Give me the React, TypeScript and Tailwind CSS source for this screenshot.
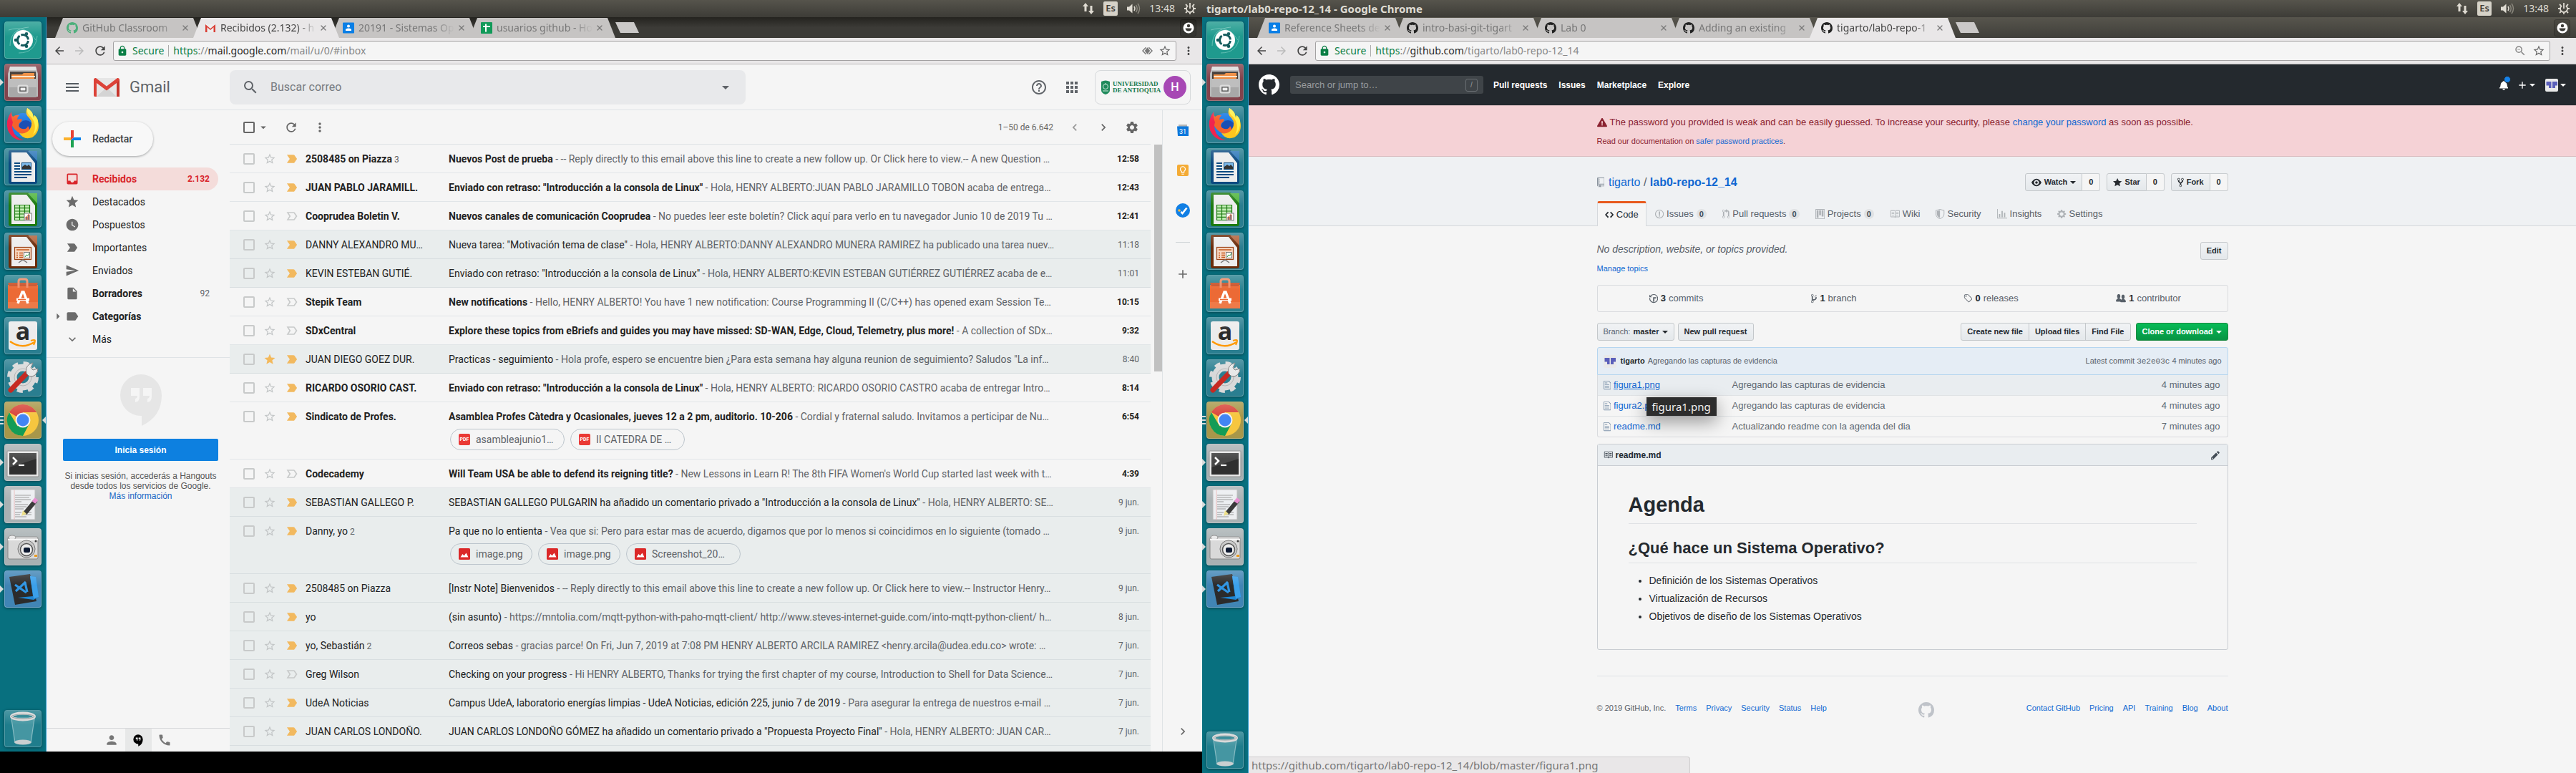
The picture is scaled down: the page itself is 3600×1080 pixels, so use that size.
import React from "react";
import {
  MdAdd,
  MdApps,
  MdArrowBack,
  MdArrowDropDown,
  MdArrowForward,
  MdArrowRight,
  MdCall,
  MdChevronLeft,
  MdChevronRight,
  MdExpandMore,
  MdHelpOutline,
  MdInbox,
  MdInsertDriveFile,
  MdLabel,
  MdLabelImportant,
  MdLabelImportantOutline,
  MdLock,
  MdMenu,
  MdMoreVert,
  MdPerson,
  MdRefresh,
  MdSearch,
  MdSend,
  MdSettings,
  MdStar,
  MdStarBorder,
  MdWatchLater,
  MdZoomOut,
  MdOutlineLightbulb,
} from "react-icons/md";
import { LuX } from "react-icons/lu";

/* ---------- Octicons ---------- */

const OCTICONS = {
  repo: [12, "M4 9H3V8h1v1zm0-3H3v1h1V6zm0-2H3v1h1V4zm0-2H3v1h1V2zm8-1v12c0 .55-.45 1-1 1H6v2l-1.5-1.5L3 16v-2H1c-.55 0-1-.45-1-1V1c0-.55.45-1 1-1h10c.55 0 1 .45 1 1zm-1 10H1v2h2v-1h3v1h5v-2zm0-10H2v9h9V1z"],
  code: [14, "M9.5 3L8 4.5 11.5 8 8 11.5 9.5 13 14 8 9.5 3zm-5 0L0 8l4.5 5L6 11.5 2.5 8 6 4.5 4.5 3z"],
  issue: [14, "M7 2.3c3.14 0 5.7 2.56 5.7 5.7s-2.56 5.7-5.7 5.7A5.71 5.71 0 0 1 1.3 8c0-3.14 2.56-5.7 5.7-5.7zM7 1C3.14 1 0 4.14 0 8s3.14 7 7 7 7-3.14 7-7-3.14-7-7-7zm1 3H6v5h2V4zm0 6H6v2h2v-2z"],
  pull: [12, "M11 11.28V5c-.03-.78-.34-1.47-.94-2.06C9.46 2.35 8.78 2.03 8 2H7V0L4 3l3 3V4h1c.27.02.48.11.69.31.21.2.3.42.31.69v6.28A1.993 1.993 0 0 0 10 15a1.993 1.993 0 0 0 1-3.72zm-1 2.92c-.66 0-1.2-.55-1.2-1.2 0-.65.55-1.2 1.2-1.2.65 0 1.2.55 1.2 1.2 0 .65-.55 1.2-1.2 1.2zM4 3c0-1.11-.89-2-2-2a1.993 1.993 0 0 0-1 3.72v6.56A1.993 1.993 0 0 0 2 15a1.993 1.993 0 0 0 1-3.72V4.72c.59-.34 1-.98 1-1.72zm-.8 10c0 .66-.55 1.2-1.2 1.2-.65 0-1.2-.55-1.2-1.2 0-.65.55-1.2 1.2-1.2.65 0 1.2.55 1.2 1.2zM2 4.2C1.34 4.2.8 3.65.8 3c0-.65.55-1.2 1.2-1.2.65 0 1.2.55 1.2 1.2 0 .65-.55 1.2-1.2 1.2z"],
  project: [15, "M10 12h3V2h-3v10zm-4-2h3V2H6v8zm-4 4h3V2H2v12zm-1 1h13V1H1v14zM14 0H1a1 1 0 0 0-1 1v14a1 1 0 0 0 1 1h13a1 1 0 0 0 1-1V1a1 1 0 0 0-1-1z"],
  book: [16, "M3 5h4v1H3V5zm0 3h4V7H3v1zm0 2h4V9H3v1zm11-5h-4v1h4V5zm0 2h-4v1h4V7zm0 2h-4v1h4V9zm2-6v9c0 .55-.45 1-1 1H9.5l-1 1-1-1H2c-.55 0-1-.45-1-1V3c0-.55.45-1 1-1h5.5l1 1 1-1H15c.55 0 1 .45 1 1zm-8 .5L7.5 3H2v9h6V3.5zm7-.5H9.5l-.5.5V12h6V3z"],
  shield: [14, "M0 2l7-2 7 2v6.02C14 12.69 8.69 16 7 16c-1.69 0-7-3.31-7-7.98V2zm1 .75L7 1l6 1.75v5.268C13 12.104 8.449 15 7 15c-1.449 0-6-2.896-6-6.982V2.75zm1 .75L7 2v12c-1.207 0-5-2.482-5-5.985V3.5z"],
  graph: [16, "M16 14v1H0V0h1v14h15zM5 13H3V8h2v5zm4 0H7V3h2v10zm4 0h-2V6h2v7z"],
  gear: [14, "M14 8.77v-1.6l-1.94-.64-.45-1.09.88-1.84-1.13-1.13-1.81.91-1.09-.45-.69-1.92h-1.6l-.63 1.94-1.11.45-1.84-.88-1.13 1.13.91 1.81-.45 1.09L0 7.23v1.59l1.94.64.45 1.09-.88 1.84 1.13 1.13 1.81-.91 1.09.45.69 1.92h1.59l.63-1.94 1.11-.45 1.84.88 1.13-1.13-.92-1.81.47-1.09L14 8.75v.02zM7 11c-1.66 0-3-1.34-3-3s1.34-3 3-3 3 1.34 3 3-1.34 3-3 3z"],
  history: [14, "M8 13H6V6h5v2H8v5zM7 1C4.81 1 2.87 2.02 1.59 3.59L0 2v4h4L2.5 4.5C3.55 3.17 5.17 2.3 7 2.3c3.14 0 5.7 2.56 5.7 5.7s-2.56 5.7-5.7 5.7A5.71 5.71 0 0 1 1.3 8c0-.34.03-.67.09-1H.08C.03 7.33 0 7.66 0 8c0 3.86 3.14 7 7 7s7-3.14 7-7-3.14-7-7-7z"],
  branch: [10, "M10 5c0-1.11-.89-2-2-2a1.993 1.993 0 0 0-1 3.72v.3c-.02.52-.23.98-.63 1.38-.4.4-.86.61-1.38.63-.83.02-1.48.16-2 .45V4.72a1.993 1.993 0 0 0-1-3.72C.88 1 0 1.89 0 3a2 2 0 0 0 1 1.72v6.56c-.59.35-1 .99-1 1.72 0 1.11.89 2 2 2 1.11 0 2-.89 2-2 0-.53-.2-1-.53-1.36.09-.06.48-.41.59-.47.25-.11.56-.17.94-.17 1.05-.05 1.95-.45 2.75-1.25S8.95 7.77 9 6.73h-.02C9.59 6.37 10 5.73 10 5zM2 1.8c.66 0 1.2.55 1.2 1.2 0 .65-.55 1.2-1.2 1.2C1.35 4.2.8 3.65.8 3c0-.65.55-1.2 1.2-1.2zm0 12.41c-.66 0-1.2-.55-1.2-1.2 0-.65.55-1.2 1.2-1.2.65 0 1.2.55 1.2 1.2 0 .65-.55 1.2-1.2 1.2zm6-8c-.66 0-1.2-.55-1.2-1.2 0-.65.55-1.2 1.2-1.2.65 0 1.2.55 1.2 1.2 0 .65-.55 1.2-1.2 1.2z"],
  tag: [14, "M7.73 1.73C7.26 1.26 6.62 1 5.96 1H3.5C2.13 1 1 2.13 1 3.5v2.47c0 .66.27 1.3.73 1.77l6.06 6.06c.39.39 1.02.39 1.41 0l4.59-4.59a.996.996 0 0 0 0-1.41L7.73 1.73zM2.38 7.09c-.31-.3-.47-.7-.47-1.13V3.5c0-.88.72-1.59 1.59-1.59h2.47c.42 0 .83.16 1.13.47l6.14 6.13-4.73 4.73-6.13-6.15zM3.01 3h2v2H3V3h.01z"],
  people: [16, "M16 12.999c0 .439-.45 1-1 1H7.995c-.539 0-.994-.447-.995-.999H1c-.54 0-1-.561-1-1 0-2.634 3-4 3-4s.229-.409 0-1c-.841-.621-1.058-.59-1-3 .058-2.419 1.367-3 2.5-3s2.442.58 2.5 3c.058 2.41-.159 2.379-1 3-.229.59 0 1 0 1s1.549.711 2.42 2.088A6.8 6.8 0 0 1 10 8.999s.229-.409 0-1c-.841-.62-1.058-.59-1-3 .058-2.419 1.367-3 2.5-3s2.437.581 2.495 3c.059 2.41-.158 2.38-1 3-.229.59 0 1 0 1s3.005 1.366 3.005 4z"],
  eye: [16, "M8.06 2C3 2 0 8 0 8s3 6 8.06 6C13 14 16 8 16 8s-3-6-7.94-6zM8 12c-2.2 0-4-1.78-4-4 0-2.2 1.8-4 4-4 2.22 0 4 1.8 4 4 0 2.22-1.78 4-4 4zm2-4c0 1.11-.89 2-2 2-1.11 0-2-.89-2-2 0-1.11.89-2 2-2 1.11 0 2 .89 2 2z"],
  star: [14, "M14 6l-4.9-.64L7 1 4.9 5.36 0 6l3.6 3.26L2.67 14 7 11.67 11.33 14l-.93-4.74L14 6z"],
  fork: [10, "M8 1a1.993 1.993 0 0 0-1 3.72V6L5 8 3 6V4.72A1.993 1.993 0 0 0 2 1a1.993 1.993 0 0 0-1 3.72V6.5l3 3v1.78A1.993 1.993 0 0 0 5 15a1.993 1.993 0 0 0 1-3.72V9.5l3-3V4.72A1.993 1.993 0 0 0 8 1zM2 4.2C1.34 4.2.8 3.65.8 3c0-.65.55-1.2 1.2-1.2.65 0 1.2.55 1.2 1.2 0 .65-.55 1.2-1.2 1.2zm3 10c-.66 0-1.2-.55-1.2-1.2 0-.65.55-1.2 1.2-1.2.65 0 1.2.55 1.2 1.2 0 .65-.55 1.2-1.2 1.2zm3-10c-.66 0-1.2-.55-1.2-1.2 0-.65.55-1.2 1.2-1.2.65 0 1.2.55 1.2 1.2 0 .65-.55 1.2-1.2 1.2z"],
  file: [12, "M6 5H2V4h4v1zM2 8h7V7H2v1zm0 2h7V9H2v1zm0 2h7v-1H2v1zm10-7.5V14c0 .55-.45 1-1 1H1c-.55 0-1-.45-1-1V2c0-.55.45-1 1-1h7.5L12 4.5zM11 5L8 2H1v12h10V5z"],
  pencil: [14, "M0 12v3h3l8-8-3-3-8 8zm3 2H1v-2h1v1h1v1zm10.3-9.3L12 6 9 3l1.3-1.3a.996.996 0 0 1 1.41 0l1.59 1.59c.39.39.39 1.02 0 1.41z"],
  alert: [16, "M8.893 1.5c-.183-.31-.52-.5-.887-.5s-.703.19-.886.5L.138 13.499a.98.98 0 0 0 0 1.001c.193.31.53.501.886.501h13.964c.367 0 .704-.19.877-.5a1.03 1.03 0 0 0 .01-1.002L8.893 1.5zm.133 11.497H6.987v-2.003h2.039v2.003zm0-3.004H6.987V5.987h2.039v4.006z"],
  bell: [14, "M14 12v1H0v-1l.73-.58c.77-.77.81-2.55 1.19-4.42C2.69 3.23 6 2 6 2c0-.55.45-1 1-1s1 .45 1 1c0 0 3.39 1.23 4.16 5 .38 1.88.42 3.66 1.19 4.42l.66.58H14zm-7 4c1.11 0 2-.89 2-2H5c0 1.11.89 2 2 2z"],
  mark: [16, "M8 0C3.58 0 0 3.58 0 8c0 3.54 2.29 6.53 5.47 7.59.4.07.55-.17.55-.38 0-.19-.01-.82-.01-1.49-2.01.37-2.53-.49-2.69-.94-.09-.23-.48-.94-.82-1.13-.28-.15-.68-.52-.01-.53.63-.01 1.08.58 1.23.82.72 1.21 1.87.87 2.33.66.07-.52.28-.87.51-1.07-1.78-.2-3.64-.89-3.64-3.95 0-.87.31-1.59.82-2.15-.08-.2-.36-1.02.08-2.12 0 0 .67-.21 2.2.82.64-.18 1.32-.27 2-.27.68 0 1.36.09 2 .27 1.53-1.04 2.2-.82 2.2-.82.44 1.1.16 1.92.08 2.12.51.56.82 1.27.82 2.15 0 3.07-1.87 3.75-3.65 3.95.29.25.54.73.54 1.48 0 1.07-.01 1.93-.01 2.2 0 .21.15.46.55.38A8.013 8.013 0 0 0 16 8c0-4.42-3.58-8-8-8z"],
} as const;

type OctName = keyof typeof OCTICONS;

function Oct({ name, className = "h-[14px]" }: { name: OctName; className?: string }) {
  const [w, d] = OCTICONS[name];
  return (
    <svg viewBox={`0 0 ${w} 16`} className={`w-auto shrink-0 fill-current ${className}`} aria-hidden="true">
      <path fillRule="evenodd" d={d} />
    </svg>
  );
}

function Caret() {
  return <span className="inline-block border-x-4 border-t-4 border-x-transparent border-t-current" aria-hidden="true" />;
}

/* ---------- Ubuntu top bar ---------- */

function TopBar({ title }: { title?: string }) {
  return (
    <div className="flex h-6 items-center bg-linear-to-b from-[#56544c] to-[#3d3c37] pl-1.5 pr-2 font-['Noto_Sans',sans-serif] text-[#dfdbd2]">
      <span className="flex-1 truncate text-[15px] font-bold leading-6">{title}</span>
      <div className="flex items-center gap-3">
        <svg viewBox="0 0 18 18" className="h-[18px] w-[18px] fill-current" aria-label="Red">
          <path d="M5 1l4 5H6.500v7h-3V6H1z M13 17l-4-5h2.500V5h3v7H17z" />
        </svg>
        <span className="flex h-5 w-5 items-center justify-center rounded-[2px] bg-[#d6d2c8] text-[13px] font-semibold text-[#3d3c37]">Es</span>
        <svg viewBox="0 0 20 18" className="h-[18px] w-5" aria-label="Volumen">
          <path d="M1 6.500h3l4.500-4v13l-4.500-4H1z" fill="currentColor" />
          <path d="M11 6q2 3 0 6" fill="none" stroke="currentColor" strokeWidth="1.500" />
          <path d="M13.500 4q3.500 5 0 10M16 2q5 7 0 14" fill="none" stroke="#8a877d" strokeWidth="1.500" />
        </svg>
        <time className="text-sm">13:48</time>
        <svg viewBox="0 0 18 18" className="h-[18px] w-[18px]" fill="none" stroke="currentColor" aria-label="Sistema">
          <path d="M6.200 4.900a5 5 0 1 0 5.600 0" strokeWidth="1.800" />
          <path d="M9 1v8M9 14v3M1 9h3M14 9h3M3 3l2 2M13 13l2 2M3 15l2-2M13 5l2-2" strokeWidth="1.800" />
        </svg>
      </div>
    </div>
  );
}

/* ---------- Launcher ---------- */

const ICONS: Record<string, React.ReactNode> = {
  dash: (
    <>
      <path d="M6 12Q30 4 44 26M8 34Q8 10 34 8M46 20Q44 44 20 44" fill="none" stroke="#8fd6cc" strokeWidth="1" opacity=".6" />
      <circle cx="26" cy="26" r="14" fill="#fff" />
      <circle cx="26" cy="26" r="7.500" fill="none" stroke="#125a5c" strokeWidth="3" strokeDasharray="13.700 2" strokeDashoffset="-1" />
      <circle cx="16" cy="26" r="2.300" fill="#125a5c" />
      <circle cx="31" cy="17.300" r="2.300" fill="#125a5c" />
      <circle cx="31" cy="34.700" r="2.300" fill="#125a5c" />
    </>
  ),
  files: (
    <>
      <path d="M8 4h36l3 10v32H5V14z" fill="#b9b9b9" />
      <path d="M8 4h36l1 5H7z" fill="#dcdcdc" />
      <rect x="8" y="11" width="36" height="12" fill="#3c3530" />
      <path d="M10 15h15l2-2h15v10H10z" fill="#f08b3c" />
      <rect x="10" y="17" width="33" height="2" fill="#fbe3c8" />
      <rect x="7" y="21" width="38" height="26" fill="#a8a8a8" />
      <rect x="7" y="21" width="38" height="12" fill="#bebebe" />
      <rect x="19.500" y="30.500" width="13" height="10" rx="2" fill="none" stroke="#dedede" strokeWidth="2" />
      <rect x="22" y="33" width="8" height="5" fill="#eee" stroke="#444" strokeWidth="1" />
    </>
  ),
  firefox: (
    <>
      <circle cx="26" cy="27" r="17" fill="#1f7ee6" />
      <circle cx="30" cy="30" r="10" fill="#1a4fb5" />
      <path d="M10 8q0 5 2 7q4-3 9-2q-3 3-3 6l6-1q2 3-3 6q-3 6 4 8q7 1 8-4q5 6-2 10q-8 3-15-4Q6 26 10 8z" fill="#f6622c" />
      <path d="M10 8q-9 12-5 26q7 15 22 14q-12-3-15-14q-2-6 0-11Q9 16 10 8z" fill="#f0234f" />
      <path d="M32 3q-4 8 3 14q6 7 1 15q-5 8-15 6q6 10 18 6q12-8 8-23q-1-5-5-8q-1 3-1 4Q40 7 32 3z" fill="#ffc61e" />
      <path d="M32 3q-1 8 5 12q10 12 3 25q8-6 7-19q-1-5-5-8l-1 4Q40 7 32 3z" fill="#fff04a" />
    </>
  ),
  writer: (
    <>
      <path d="M8 3h26l12 15v29q0 3-3 3H9q-3 0-3-3V6q0-3 2-3z" fill="#0b4a80" />
      <path d="M10 6h21l12 15v26H10z" fill="#ededed" />
      <path d="M33 4h13v14z" fill="#2f79ba" />
      <path d="M14 21h8M14 25h8M14 29h8M14 33h24M14 37h24M14 41h18" stroke="#0b4a80" strokeWidth="2" />
      <rect x="24.500" y="20.500" width="13" height="9" fill="#7db9ea" stroke="#0b4a80" />
      <path d="M25 29v-3l4-3 3 2 2-2 3 3v3z" fill="#333" />
    </>
  ),
  calc: (
    <>
      <path d="M8 3h26l12 15v29q0 3-3 3H9q-3 0-3-3V6q0-3 2-3z" fill="#1c7a10" />
      <path d="M10 6h21l12 15v26H10z" fill="#ededed" />
      <path d="M33 4h13v14z" fill="#4fb53c" />
      <path d="M14.500 20.500h21v21h-21z M14.500 24.700h21M14.500 29h21M14.500 33h21M14.500 37.300h21M21.500 20.500v21M28.500 20.500v21" fill="#c6efb8" stroke="#1c7a10" strokeWidth="1.200" />
      <rect x="28" y="32" width="10" height="10" fill="#fff" stroke="#777" />
      <path d="M30 41v-4h2v4M33 41v-7h2v7" stroke="#d9541e" fill="#3f8fd6" />
    </>
  ),
  impress: (
    <>
      <path d="M8 3h26l12 15v29q0 3-3 3H9q-3 0-3-3V6q0-3 2-3z" fill="#6b2c0a" />
      <path d="M10 6h21l12 15v26H10z" fill="#ededed" />
      <path d="M33 4h13v14z" fill="#b2623a" />
      <rect x="14.500" y="20.500" width="23" height="17" fill="#f7d9c3" stroke="#9c4214" strokeWidth="1.200" />
      <path d="M17 24h18M17 28.500h2M17 31.500h2M17 34.500h2M21 28.500h5M21 31.500h5M21 34.500h5" stroke="#c5551a" strokeWidth="1.600" />
      <rect x="27.500" y="27.500" width="8" height="8" fill="#fff" stroke="#777" />
      <path d="M29 34l2-3 2 1 2-3" fill="none" stroke="#2a9a3a" />
      <path d="M20 42l6-4 6 4" fill="none" stroke="#777" strokeWidth="1.500" />
    </>
  ),
  software: (
    <>
      <path d="M5 14h42v33H5z" fill="#ec6a35" />
      <path d="M5 11h42l-2 5H7z" fill="#c9522a" />
      <path d="M20 18V9q0-3 3-3h6q3 0 3 3v9" fill="none" stroke="#f08c66" strokeWidth="3" />
      <path d="M5 38h42v9H5z" fill="#f2895c" opacity=".5" />
      <path d="M19 40l6-16h2l6 16" fill="none" stroke="#fff" strokeWidth="3.500" />
      <path d="M17 34.500h18" stroke="#fff" strokeWidth="4" />
      <path d="M19 34.500h11" stroke="#ec6a35" strokeWidth="1.500" />
    </>
  ),
  amazon: (
    <>
      <rect x="6" y="6" width="40" height="40" rx="3" fill="#ececec" />
      <text x="26" y="32" textAnchor="middle" className="font-['Open_Sans',sans-serif] text-[34px] font-bold" fill="#2b2b2b">a</text>
      <path d="M8 34q17 12 34 1" fill="none" stroke="#f90" strokeWidth="2.500" />
      <path d="M37 33q6-2 6 0t-2 6" fill="none" stroke="#f90" strokeWidth="2" />
    </>
  ),
  settings: (
    <>
      <circle cx="26" cy="25" r="13.500" fill="none" stroke="#d9d9d9" strokeWidth="10" />
      <circle cx="26" cy="25" r="19.500" fill="none" stroke="#d9d9d9" strokeWidth="5" strokeDasharray="8 7.315" />
      <circle cx="26" cy="25" r="12" fill="none" stroke="#b5b5b5" strokeWidth="1" />
      <path d="M9 43L34 17" stroke="#c62a22" strokeWidth="7" strokeLinecap="round" />
      <path d="M31 20q-2-9 4-13l5-2-3 7 3 3 7-2q-1 9-8 11-4 0-5-1z" fill="#e8e8e8" stroke="#777" strokeWidth="1" />
    </>
  ),
  chrome: (
    <>
      <circle cx="26" cy="26" r="22" fill="#f6c63f" />
      <path d="M26 26L6.900 15A22 22 0 0 1 45 15H26z" fill="#d8453a" />
      <path d="M26 26l-7.500 8.500L6.900 15A22 22 0 0 0 26 48l9-17z" fill="#139c56" />
      <circle cx="26" cy="26" r="10.500" fill="#f1f1f1" />
      <circle cx="26" cy="26" r="8.500" fill="#4285f4" />
    </>
  ),
  terminal: (
    <>
      <rect x="4" y="10" width="44" height="36" rx="1" fill="#e6e6e6" stroke="#8b8b8b" strokeWidth="1" />
      <rect x="7" y="13" width="38" height="30" fill="#2f2f2f" />
      <path d="M7 13h38v8L7 33z" fill="#fff" opacity=".12" />
      <path d="M12 19l5 5-5 5" fill="none" stroke="#fff" strokeWidth="2.500" />
      <path d="M20 30h8" stroke="#fff" strokeWidth="2.200" />
    </>
  ),
  gedit: (
    <>
      <rect x="9" y="5" width="34" height="42" fill="#eceef1" stroke="#b5b5b5" />
      <path d="M14 5v42" stroke="#e8b8b8" />
      <path d="M15 13h22M15 16h20M15 19h22M15 22h9M15 26h18M15 29h16M15 32h12M15 37h9M30 37h8M15 40h7M26 40h12M15 43h16" stroke="#999" strokeWidth="1" />
      <path d="M29 38L44 20" stroke="#3a3a3a" strokeWidth="6" />
      <path d="M41 23l4-5" stroke="#e88fd2" strokeWidth="6" />
      <path d="M24 42l2-8 5 5z" fill="#eee08a" />
    </>
  ),
  camera: (
    <>
      <rect x="5" y="12" width="42" height="31" rx="2" fill="#d9d9d9" stroke="#888" strokeWidth="1" />
      <ellipse cx="11" cy="13" rx="5" ry="3" fill="#e8e8e8" stroke="#888" />
      <path d="M5 16h42" stroke="#f6f6f6" strokeWidth="2" />
      <circle cx="31" cy="29" r="12" fill="#c9c9c9" stroke="#777" strokeWidth="1" />
      <circle cx="31" cy="30" r="8.500" fill="#eee" stroke="#555" strokeWidth="1.500" />
      <rect x="27" y="27" width="9" height="7" rx="2" fill="#0c1830" />
      <rect x="42" y="37" width="4" height="3" fill="#e89a20" />
      <circle cx="44" cy="18" r="1.500" fill="#333" />
    </>
  ),
  code: (
    <>
      <path d="M7 9l29-4 9 38-30 5z" fill="#2b2b2b" />
      <path d="M36 8l8 1 4 28-7 4-22-3 21-2z" fill="#1f86d3" />
      <path d="M36 8l8 1 4 28-7 2z" fill="#3ba0ea" />
      <path d="M30 16L16 29M15 20l16 11" stroke="#2f95e3" strokeWidth="3.200" />
      <path d="M29 17l3 13" stroke="#2f95e3" strokeWidth="3.200" />
    </>
  ),
  trash: (
    <>
      <path d="M9 10h34l-5 36q-12 4-24 0z" fill="#9fd0d6" opacity=".3" />
      <path d="M10 12l5 33M42 12l-5 33" stroke="#cfe4e6" opacity=".5" />
      <ellipse cx="26" cy="45" rx="12" ry="3.500" fill="#c9cfd0" />
      <ellipse cx="26" cy="9" rx="16" ry="4.500" fill="none" stroke="#d6d6d6" strokeWidth="4" />
      <ellipse cx="26" cy="9" rx="16" ry="3" fill="none" stroke="#8c9a9c" strokeWidth="1" />
    </>
  ),
};

const LAUNCHER = [
  { id: "dash", label: "Buscar en el equipo", tint: "bg-[#1f9a8e]" },
  { id: "files", label: "Archivos", tint: "bg-[#83434c]", running: 1 },
  { id: "firefox", label: "Firefox", tint: "bg-[#2a7e90]" },
  { id: "writer", label: "LibreOffice Writer", tint: "bg-[#2a7e90]" },
  { id: "calc", label: "LibreOffice Calc", tint: "bg-[#2a7e90]" },
  { id: "impress", label: "LibreOffice Impress", tint: "bg-[#2a7e90]" },
  { id: "software", label: "Software de Ubuntu", tint: "bg-[#2a8290]" },
  { id: "amazon", label: "Amazon", tint: "bg-[#2a7e90]" },
  { id: "settings", label: "Configuración", tint: "bg-[#2a7e90]" },
  { id: "chrome", label: "Google Chrome", tint: "bg-[#a8974a]", running: 3 },
  { id: "terminal", label: "Terminal", tint: "bg-[#a9b1b3]", running: 1 },
  { id: "gedit", label: "Editor de textos", tint: "bg-[#a9b1b3]", running: 1 },
  { id: "camera", label: "Captura de pantalla", tint: "bg-[#a9b1b3]", running: 1 },
  { id: "code", label: "Visual Studio Code", tint: "bg-[#4185b5]", running: 1 },
];

function Tile({ id, label, tint, running = 0 }: { id: string; label: string; tint: string; running?: number }) {
  return (
    <button aria-label={label} className={`relative h-[52px] w-[52px] rounded-[4px] border border-white/25 shadow-[0_1px_4px_rgba(0,0,0,0.4)] ${tint}`}>
      <svg viewBox="0 0 52 52" className="-m-px h-[52px] w-[52px]" aria-hidden="true">{ICONS[id]}</svg>
      <span className="absolute inset-x-0 top-0 h-5 rounded-t-[3px] bg-linear-to-b from-white/20 to-transparent" />
      {running === 1 && <span className="absolute -left-[7px] top-5 border-y-[5px] border-l-[5px] border-y-transparent border-l-[#d8dcdc]" />}
      {running === 3 && (
        <>
          <span className="absolute -left-[7px] top-[19px] h-3 w-[5px] border-y-2 border-[#d8dcdc]" />
          <span className="absolute -left-[7px] top-6 h-0.5 w-[5px] bg-[#d8dcdc]" />
          <span className="absolute -right-[7px] top-5 border-y-[5px] border-r-[5px] border-y-transparent border-r-[#d8dcdc]" />
        </>
      )}
    </button>
  );
}

function Launcher() {
  return (
    <nav aria-label="Lanzador" className="flex w-[65px] shrink-0 flex-col gap-[7px] border-r border-[#2f9bd0] bg-[#08707f] px-1.5 pb-1.5 pt-1.5">
      {LAUNCHER.map((item) => (
        <Tile key={item.id} {...item} />
      ))}
      <div className="mt-auto h-[52px]">
        <Tile id="trash" label="Papelera" tint="bg-[#1f7d8c]" />
      </div>
    </nav>
  );
}

/* ---------- Chrome frame ---------- */

function Favicon({ kind }: { kind: string }) {
  if (kind === "github") return <Oct name="mark" className="h-4 text-[#222]" />;
  if (kind === "classroom-gh") return <Oct name="mark" className="h-4 text-[#4caf7a]" />;
  if (kind === "gmail")
    return (
      <svg viewBox="0 0 16 16" className="h-4 w-4 shrink-0" aria-hidden="true">
        <path d="M1 3h14v11H1z" fill="#eee" />
        <path d="M1 14V3l7 6 7-6v11h-2.500V7L8 11 3.500 7v7z" fill="#d93c33" />
      </svg>
    );
  if (kind === "classroom")
    return (
      <svg viewBox="0 0 16 16" className="h-4 w-4 shrink-0" aria-hidden="true">
        <rect width="16" height="15" y=".5" rx="1" fill="#0a7fe6" />
        <circle cx="8" cy="5.500" r="2" fill="#fff" />
        <path d="M4 12V9.800Q8 7 12 9.800V12z" fill="#fff" />
      </svg>
    );
  return (
    <svg viewBox="0 0 16 16" className="h-4 w-4 shrink-0" aria-hidden="true">
      <rect width="16" height="16" rx="1" fill="#119a59" />
      <path d="M7 2.500v11M3 6h10" stroke="#fff" strokeWidth="2" />
    </svg>
  );
}

interface TabInfo {
  title: string;
  icon: string;
  active?: boolean;
}

function TabStrip({ tabs, dark }: { tabs: TabInfo[]; dark?: boolean }) {
  return (
    <div className={`flex h-[29px] items-end pl-3 pr-2 ${dark ? "bg-linear-to-b from-[#24231f] via-[#3c3b37] to-[#3c3b37]" : "bg-linear-to-b from-[#57554d] to-[#403f3a]"}`}>
      {tabs.map((tab) => (
        <div
          key={tab.title}
          className={`-mr-[11px] flex h-7 w-[204px] items-center pb-px pl-4 pr-[15px] [clip-path:polygon(11px_0,193px_0,100%_100%,0_100%)] ${tab.active ? "z-10 bg-[#e9e7e8] text-[#444]" : "bg-[#c6c4c3] text-[#777]"}`}
        >
          <Favicon kind={tab.icon} />
          <button className="ml-1.5 w-[134px] overflow-hidden whitespace-nowrap text-left text-sm [mask-image:linear-gradient(to_right,black_80%,transparent)]">
            {tab.title}
          </button>
          <button aria-label="Cerrar pestaña" className="ml-1 text-[#777]">
            <LuX className="h-3 w-3" strokeWidth={2.5} />
          </button>
        </div>
      ))}
      <button aria-label="Nueva pestaña" className="mb-[7px] ml-[11px] h-[15px] w-[33px] bg-[#cbc9c8] [clip-path:polygon(0_0,26px_0,100%_100%,7px_100%)]" />
      <div className="ml-auto flex h-6 w-[23px] items-center justify-center self-center rounded border border-black/20 bg-black/10">
        <svg viewBox="0 0 16 16" className="h-4 w-4" aria-label="Perfil">
          <circle cx="8" cy="8" r="7.500" fill="#fff" />
          <circle cx="8" cy="5" r="2.200" fill="#3c3b37" />
          <path d="M3.500 8.500h9Q12 12.500 8 12.500T3.500 8.500z" fill="#3c3b37" />
        </svg>
      </div>
    </div>
  );
}

function AddressBar({ host, path, tool }: { host: string; path: string; tool: React.ReactNode }) {
  return (
    <div className="flex h-[37px] items-center border-b border-[#bcbabb] bg-[#e9e7e8] pl-[9px] pr-2.5 text-[#444]">
      <button aria-label="Atrás"><MdArrowBack className="h-[18px] w-[18px]" /></button>
      <button aria-label="Adelante" className="ml-2.5 text-[#bbb]"><MdArrowForward className="h-[18px] w-[18px]" /></button>
      <button aria-label="Recargar" className="ml-2.5"><MdRefresh className="h-5 w-5" /></button>
      <div className="ml-2 flex h-7 flex-1 items-center rounded-[3px] border border-[#a3a1a2] bg-[#f5f5f5] pl-1 pr-1.5">
        <MdLock className="h-4 w-4 text-[#0b7f46]" />
        <span className="ml-1.5 text-sm text-[#0b7f46]">Secure</span>
        <span className="mx-1.5 h-4 w-px bg-[#aaa]" />
        <div role="textbox" aria-label="Dirección" className="flex-1 truncate text-sm text-[#888]">
          <span className="text-[#0b7f46]">https</span>://<span className="text-[#2b2b2b]">{host}</span>{path}
        </div>
        {tool}
        <button aria-label="Añadir a marcadores" className="ml-2 text-[#666]"><MdStarBorder className="h-[18px] w-[18px]" /></button>
      </div>
      <button aria-label="Menú" className="ml-2"><MdMoreVert className="h-[18px] w-[18px]" /></button>
    </div>
  );
}

/* ---------- Gmail ---------- */

interface Chip {
  kind: "pdf" | "image";
  name: string;
  wide?: boolean;
}

interface Mail {
  from: string;
  count?: number;
  subject: string;
  snippet: string;
  time: string;
  unread?: boolean;
  important?: boolean;
  starred?: boolean;
  chips?: Chip[];
}

const MAILS: Mail[] = [
  { from: "2508485 on Piazza", count: 3, subject: "Nuevos Post de prueba", snippet: "-- Reply directly to this email above this line to create a new follow up. Or Click here to view.-- A new Question …", time: "12:58", unread: true, important: true },
  { from: "JUAN PABLO JARAMILL.", subject: 'Enviado con retraso: "Introducción a la consola de Linux"', snippet: "Hola, HENRY ALBERTO:JUAN PABLO JARAMILLO TOBON acaba de entrega…", time: "12:43", unread: true, important: true },
  { from: "Cooprudea Boletin V.", subject: "Nuevos canales de comunicación Cooprudea", snippet: "No puedes leer este boletín? Click aquí para verlo en tu navegador Junio 10 de 2019 Tu …", time: "12:41", unread: true },
  { from: "DANNY ALEXANDRO MU…", subject: 'Nueva tarea: "Motivación tema de clase"', snippet: "Hola, HENRY ALBERTO:DANNY ALEXANDRO MUNERA RAMIREZ ha publicado una tarea nuev…", time: "11:18", important: true },
  { from: "KEVIN ESTEBAN GUTIÉ.", subject: 'Enviado con retraso: "Introducción a la consola de Linux"', snippet: "Hola, HENRY ALBERTO:KEVIN ESTEBAN GUTIÉRREZ GUTIÉRREZ acaba de e…", time: "11:01", important: true },
  { from: "Stepik Team", subject: "New notifications", snippet: "Hello, HENRY ALBERTO! You have 1 new notification: Course Programming II (C/C++) has opened exam Session Te…", time: "10:15", unread: true },
  { from: "SDxCentral", subject: "Explore these topics from eBriefs and guides you may have missed: SD-WAN, Edge, Cloud, Telemetry, plus more!", snippet: "A collection of SDx…", time: "9:32", unread: true },
  { from: "JUAN DIEGO GOEZ DUR.", subject: "Practicas - seguimiento", snippet: 'Hola profe, espero se encuentre bien ¿Para esta semana hay alguna reunion de seguimiento? Saludos "La inf…', time: "8:40", important: true, starred: true },
  { from: "RICARDO OSORIO CAST.", subject: 'Enviado con retraso: "Introducción a la consola de Linux"', snippet: "Hola, HENRY ALBERTO: RICARDO OSORIO CASTRO acaba de entregar Intro…", time: "8:14", unread: true, important: true },
  {
    from: "Sindicato de Profes.", subject: "Asamblea Profes Càtedra y Ocasionales, jueves 12 a 2 pm, auditorio. 10-206", snippet: "Cordial y fraternal saludo. Invitamos a perticipar de Nu…", time: "6:54", unread: true, important: true,
    chips: [{ kind: "pdf", name: "asambleajunio1…", wide: true }, { kind: "pdf", name: "II CATEDRA DE …", wide: true }],
  },
  { from: "Codecademy", subject: "Will Team USA be able to defend its reigning title?", snippet: "New Lessons in Learn R! The 8th FIFA Women's World Cup started last week with t…", time: "4:39", unread: true },
  { from: "SEBASTIAN GALLEGO P.", subject: 'SEBASTIAN GALLEGO PULGARIN ha añadido un comentario privado a "Introducción a la consola de Linux"', snippet: "Hola, HENRY ALBERTO: SE…", time: "9 jun.", important: true },
  {
    from: "Danny, yo", count: 2, subject: "Pa que no lo entienta", snippet: "Vea que si: Pero para estar mas de acuerdo, digamos que por lo menos si coincidimos en lo siguiente (tomado …", time: "9 jun.", important: true,
    chips: [{ kind: "image", name: "image.png" }, { kind: "image", name: "image.png" }, { kind: "image", name: "Screenshot_20…", wide: true }],
  },
  { from: "2508485 on Piazza", subject: "[Instr Note] Bienvenidos", snippet: "-- Reply directly to this email above this line to create a new follow up. Or Click here to view.-- Instructor Henry…", time: "9 jun.", important: true },
  { from: "yo", subject: "(sin asunto)", snippet: "https://mntolia.com/mqtt-python-with-paho-mqtt-client/ http://www.steves-internet-guide.com/into-mqtt-python-client/ h…", time: "8 jun.", important: true },
  { from: "yo, Sebastián", count: 2, subject: "Correos sebas", snippet: "gracias parce! On Fri, Jun 7, 2019 at 7:08 PM HENRY ALBERTO ARCILA RAMIREZ <henry.arcila@udea.edu.co> wrote: …", time: "7 jun.", important: true },
  { from: "Greg Wilson", subject: "Checking on your progress", snippet: "Hi HENRY ALBERTO, Thanks for trying the first chapter of my course, Introduction to Shell for Data Science…", time: "7 jun." },
  { from: "UdeA Noticias", subject: "Campus UdeA, laboratorio energías limpias - UdeA Noticias, edición 225, junio 7 de 2019", snippet: "Para asegurar la entrega de nuestros e-mail …", time: "7 jun.", important: true },
  { from: "JUAN CARLOS LONDOÑO.", subject: 'JUAN CARLOS LONDOÑO GÓMEZ ha añadido un comentario privado a "Propuesta Proyecto Final"', snippet: "Hola, HENRY ALBERTO: JUAN CAR…", time: "7 jun.", important: true },
];

function ChipView({ chip }: { chip: Chip }) {
  return (
    <button className={`flex h-[30px] items-center gap-2 rounded-full border border-[#bcc5cc] pl-[11px] text-sm text-[#5f6368] ${chip.wide ? "w-[160px]" : "w-[115px]"}`}>
      {chip.kind === "pdf" ? (
        <span className="flex h-4 w-4 items-center justify-center rounded-[2px] bg-[#ea3a35] text-[7px] font-bold text-white">PDF</span>
      ) : (
        <svg viewBox="0 0 16 16" className="h-4 w-4" aria-hidden="true">
          <rect width="16" height="16" rx="1.500" fill="#db2828" />
          <path d="M2.500 12.500l3-4.500 2 2.500 3-4 3 6z" fill="#fff" />
        </svg>
      )}
      {chip.name}
    </button>
  );
}

function MailRow({ mail }: { mail: Mail }) {
  const weight = mail.unread ? "font-bold" : "font-normal";
  return (
    <li className={`border-b pl-[19px] pr-4 text-sm ${mail.unread ? "border-[#e1e5e8] bg-[#f5f5f5]" : "border-[#d8dee0] bg-[#e9eded]"}`}>
      <div className="flex h-[39px] items-center">
        <input type="checkbox" aria-label={`Seleccionar ${mail.from}`} className="h-4 w-4 shrink-0 appearance-none rounded-[2px] border-2 border-[#c8caca]" />
        <button aria-label="Destacar" className="ml-3 shrink-0">
          {mail.starred ? <MdStar className="h-[18px] w-[18px] text-[#f3b95c]" /> : <MdStarBorder className="h-[18px] w-[18px] text-[#c2c5c6]" />}
        </button>
        <button aria-label="Importante" className="ml-3 shrink-0">
          {mail.important ? <MdLabelImportant className="h-5 w-5 text-[#f2b95f]" /> : <MdLabelImportantOutline className="h-5 w-5 text-[#c8caca]" />}
        </button>
        <span className={`ml-[9px] w-[200px] shrink-0 truncate text-[#222] ${weight}`}>
          {mail.from}
          {mail.count && <span className="text-xs font-normal text-[#5f6368]"> {mail.count}</span>}
        </span>
        <a href="#mensaje" className="min-w-0 flex-1 truncate text-[#5f6368]">
          <span className={`text-[#222] ${weight}`}>{mail.subject}</span> - {mail.snippet}
        </a>
        <time className={`w-[92px] shrink-0 text-right text-xs ${mail.unread ? "font-bold text-[#222]" : "text-[#5f6368]"}`}>{mail.time}</time>
      </div>
      {mail.chips && (
        <div className="-mt-0.5 flex h-[42px] items-start gap-2 pl-[289px]">
          {mail.chips.map((chip, i) => (
            <ChipView key={i} chip={chip} />
          ))}
        </div>
      )}
    </li>
  );
}

const FOLDERS = [
  { label: "Recibidos", icon: MdInbox, count: "2.132", active: true },
  { label: "Destacados", icon: MdStar },
  { label: "Pospuestos", icon: MdWatchLater },
  { label: "Importantes", icon: MdLabelImportant },
  { label: "Enviados", icon: MdSend },
  { label: "Borradores", icon: MdInsertDriveFile, count: "92", bold: true },
  { label: "Categorías", icon: MdLabel, bold: true, nested: true },
  { label: "Más", icon: MdExpandMore },
];

function HangoutsMark({ className }: { className: string }) {
  return (
    <svg viewBox="0 0 60 74" className={className} aria-hidden="true">
      <path d="M30 1a29 29 0 0 0 0 58h1v14Q59 60 59 30A29 29 0 0 0 30 1z" fill="currentColor" />
      <path d="M16 20h12v12q0 7-6 8v-5q3-1 3-4h-9zM33 20h12v12q0 7-6 8v-5q3-1 3-4h-9z" className="fill-[#f5f5f5]" />
    </svg>
  );
}

function MailSidebar() {
  return (
    <aside className="flex w-64 shrink-0 flex-col text-sm text-[#222]">
      <button className="ml-2 mt-4 flex h-12 w-[141px] items-center gap-4 self-start rounded-full bg-[#f8f8f8] pl-4 font-medium text-[#3c4043] shadow-[0_1px_3px_rgba(60,64,67,0.45)]">
        <svg viewBox="0 0 24 24" className="h-6 w-6" aria-hidden="true">
          <path d="M10 0h4v10l-4 4z" fill="#ea4335" />
          <path d="M0 10h10v4H0z" fill="#fbb12d" />
          <path d="M10 14h4v10h-4z" fill="#1ea352" />
          <path d="M14 10h10v4H10z" fill="#0a80ec" />
        </svg>
        Redactar
      </button>
      <ul className="mt-4">
        {FOLDERS.map(({ label, icon: Icon, count, active, bold, nested }) => (
          <li key={label} className="relative">
            <a
              href={`#${label}`}
              className={`mr-4 flex h-8 items-center rounded-r-full pl-[26px] pr-3 ${active ? "bg-[#f4dcda] font-bold text-[#d9252a]" : ""} ${bold ? "font-bold" : ""}`}
            >
              <Icon className={`h-5 w-5 ${active ? "" : "text-[#6b6b6b]"}`} />
              <span className="ml-[18px] flex-1">{label}</span>
              {count && <span className={`text-xs ${active ? "" : "font-normal text-[#5f6368]"}`}>{count}</span>}
            </a>
            {nested && <MdArrowRight className="absolute left-1.5 top-1.5 h-5 w-5 text-[#6b6b6b]" />}
          </li>
        ))}
      </ul>
      <div className="mt-[9px] flex flex-col items-center border-t border-[#dfe3e6] pl-[23px] pr-4 pt-[22px] text-center text-xs text-[#555]">
        <HangoutsMark className="h-[74px] w-[60px] text-[#e6e6e6]" />
        <button className="mt-[17px] h-[31px] w-full rounded-[2px] bg-[#0d80e0] font-['Liberation_Sans',sans-serif] font-bold text-white">Inicia sesión</button>
        <p className="-mx-1 mt-3.5 whitespace-nowrap font-['Liberation_Sans',sans-serif] leading-[14px]">
          Si inicias sesión, accederás a Hangouts
          <br />
          desde todos los servicios de Google.
          <br />
          <a href="#info" className="text-[#1a67c4]">Más información</a>
        </p>
      </div>
      <div className="mt-auto flex h-[33px] justify-center border-t border-[#d6d8da] text-[#777]">
        <button aria-label="Contactos" className="flex w-[37px] items-center justify-center"><MdPerson className="h-5 w-5" /></button>
        <button aria-label="Hangouts" className="flex w-[37px] items-center justify-center bg-[#e7e8e8] text-black"><HangoutsMark className="h-[17px] w-[14px]" /></button>
        <button aria-label="Llamadas" className="flex w-[37px] items-center justify-center"><MdCall className="h-5 w-5" /></button>
      </div>
    </aside>
  );
}

function GmailHeader() {
  return (
    <header className="flex h-16 items-center border-b border-[#dfe3e6] pl-6 pr-4 text-[#5f6368]">
      <div className="flex w-[232px] items-center">
        <button aria-label="Menú principal"><MdMenu className="h-6 w-6 text-[#555b61]" /></button>
        <svg viewBox="0 0 36 26" className="ml-[18px] h-[26px] w-9" aria-hidden="true">
          <path d="M2 0h32v26H2z" fill="#e6e6e6" />
          <path d="M4 26l14-13 14 13z" fill="#d4d4d4" />
          <path d="M0 2.500Q0 0 2.500 0H3l15 11.500L33 0h.5Q36 0 36 2.500V26h-4V7L18 17.500 4 7v19H1.500Q0 26 0 24z" fill="#dc4238" />
          <path d="M32 7l4-4v23h-4z" fill="#c6352c" />
        </svg>
        <span className="ml-3.5 text-[22px]">Gmail</span>
      </div>
      <label className="flex h-12 min-w-0 max-w-[721px] flex-1 items-center rounded-lg bg-[#e8e9eb] pl-[17px] pr-4">
        <MdSearch className="h-6 w-6" />
        <input type="text" aria-label="Buscar correo" placeholder="Buscar correo" className="ml-4 flex-1 bg-transparent text-base outline-none placeholder:text-[#777b80]" />
        <MdArrowDropDown className="h-6 w-6" />
      </label>
      <div className="ml-auto flex items-center">
        <button aria-label="Ayuda"><MdHelpOutline className="h-6 w-6" /></button>
        <button aria-label="Aplicaciones" className="ml-[22px]"><MdApps className="h-6 w-6" /></button>
        <div className="ml-5 flex h-12 w-[134px] items-center rounded-lg border border-[#d6d9db] pl-[7px] pr-[5px]">
          <svg viewBox="0 0 14 20" className="h-5 w-3.5 shrink-0" aria-hidden="true">
            <path d="M1 2q6-3 12 0v12q0 4-6 6-6-2-6-6z" fill="#1f8a5b" />
            <circle cx="7" cy="9" r="3.500" fill="none" stroke="#d5ece1" />
            <path d="M3 15h8M7 4v2" stroke="#d5ece1" />
          </svg>
          <span className="ml-[3px] whitespace-nowrap font-['Liberation_Serif',serif] text-[9px] font-bold leading-[9px] text-[#187a4e]">
            UNIVERSIDAD
            <br />
            DE ANTIOQUIA
          </span>
          <span className="ml-auto flex h-8 w-8 shrink-0 items-center justify-center rounded-full bg-[#a748b4] text-base font-medium text-white">H</span>
        </div>
      </div>
    </header>
  );
}

function SidePanel() {
  return (
    <aside className="flex w-14 shrink-0 flex-col items-center border-l border-[#dfe3e6] pb-[18px] pt-5 text-[#6b6b6b]">
      <button aria-label="Calendar">
        <svg viewBox="0 0 16 16" className="h-4 w-4">
          <path d="M2 0h12v3H2z" fill="#b5b5b5" />
          <path d="M0 2.500h16V16H1z" fill="#0d78dc" />
          <text x="8" y="12.500" textAnchor="middle" className="text-[9px]" fill="#fff">31</text>
        </svg>
      </button>
      <button aria-label="Keep" className="mt-10 flex h-4 w-4 items-center justify-center rounded-[2px] bg-[#f4ab35] text-white">
        <MdOutlineLightbulb className="h-3.5 w-3.5" />
      </button>
      <button aria-label="Tasks" className="mt-[38px]">
        <svg viewBox="0 0 20 20" className="h-5 w-5">
          <circle cx="10" cy="10" r="10" fill="#117fe4" />
          <circle cx="5" cy="10" r="1.800" fill="#f4b73a" />
          <path d="M7.500 12l2 2 6-7.500" fill="none" stroke="#fff" strokeWidth="2.600" />
        </svg>
      </button>
      <span className="mt-[34px] h-px w-5 bg-[#cfd3d6]" />
      <button aria-label="Obtener complementos" className="mt-[34px]"><MdAdd className="h-5 w-5" /></button>
      <button aria-label="Ocultar panel" className="mt-auto"><MdChevronRight className="h-5 w-5" /></button>
    </aside>
  );
}

function Gmail() {
  return (
    <div className="bg-[#f5f5f5] font-[Roboto,sans-serif]">
      <GmailHeader />
      <div className="flex">
        <MailSidebar />
        <main className="min-w-0 flex-1">
          <div className="mr-4 flex h-12 items-center border-b border-[#dfe3e6] pl-[19px] pr-4 text-[#666]">
            <input type="checkbox" aria-label="Seleccionar todo" className="h-4 w-4 appearance-none rounded-[2px] border-2 border-[#666]" />
            <MdArrowDropDown className="ml-[3px] h-[18px] w-[18px]" />
            <button aria-label="Actualizar" className="ml-5"><MdRefresh className="h-5 w-5" /></button>
            <button aria-label="Más opciones" className="ml-5"><MdMoreVert className="h-5 w-5" /></button>
            <span className="ml-auto text-xs">1–50 de 6.642</span>
            <button aria-label="Más recientes" className="ml-5 text-[#999]"><MdChevronLeft className="h-5 w-5" /></button>
            <button aria-label="Más antiguos" className="ml-5"><MdChevronRight className="h-5 w-5" /></button>
            <button aria-label="Configuración" className="ml-5"><MdSettings className="h-5 w-5" /></button>
          </div>
          <div className="flex">
            <ul className="min-w-0 flex-1">
              {MAILS.map((mail, i) => (
                <MailRow key={i} mail={mail} />
              ))}
              <li className="h-2 bg-[#e9eded]" aria-hidden="true" />
            </ul>
            <div className="ml-[5px] h-[317px] w-[11px] bg-[#c1c1c1]" aria-hidden="true" />
          </div>
        </main>
        <SidePanel />
      </div>
    </div>
  );
}

/* ---------- GitHub ---------- */

function Avatar() {
  return (
    <svg viewBox="0 0 18 18" className="h-[18px] w-[18px] shrink-0 rounded-[2px]" aria-label="tigarto">
      <rect width="18" height="18" fill="#e9e9e9" />
      <path d="M1.500 4h7v9h-3.500V9.500H1.500zM10 4h7v5.500h-3V13h-4z" fill="#5a5fba" />
    </svg>
  );
}

const LINK = "text-[#1068d2]";
const BTN = "flex h-[25px] items-center gap-1 border border-[#c4c8cb] bg-linear-to-b from-[#f1f3f5] to-[#e4e8eb] px-2 text-[11px] font-bold text-[#24292e]";

function Counter({ icon, label, caret }: { icon: OctName; label: string; caret?: boolean }) {
  return (
    <div className="flex">
      <button className={`${BTN} rounded-l-[3px]`}>
        <Oct name={icon} />
        {label}
        {caret && <Caret />}
      </button>
      <a href="#count" className="flex h-[25px] w-[25px] items-center justify-center rounded-r-[3px] border border-l-0 border-[#c9cdd0] bg-[#f5f5f5] text-[11px] font-bold">0</a>
    </div>
  );
}

const REPO_TABS: { icon: OctName; label: string; count?: number }[] = [
  { icon: "issue", label: "Issues", count: 0 },
  { icon: "pull", label: "Pull requests", count: 0 },
  { icon: "project", label: "Projects", count: 0 },
  { icon: "book", label: "Wiki" },
  { icon: "shield", label: "Security" },
  { icon: "graph", label: "Insights" },
  { icon: "gear", label: "Settings" },
];

const STATS: { icon: OctName; n: number; label: string }[] = [
  { icon: "history", n: 3, label: "commits" },
  { icon: "branch", n: 1, label: "branch" },
  { icon: "tag", n: 0, label: "releases" },
  { icon: "people", n: 1, label: "contributor" },
];

const FILES = [
  { name: "figura1.png", message: "Agregando las capturas de evidencia", age: "4 minutes ago", hover: true },
  { name: "figura2.png", message: "Agregando las capturas de evidencia", age: "4 minutes ago" },
  { name: "readme.md", message: "Actualizando readme con la agenda del dia", age: "7 minutes ago" },
];

const WRAP = "mx-auto w-full max-w-[882px]";

function GitHub() {
  return (
    <div className="relative flex flex-1 flex-col bg-[#f5f5f5] font-['Liberation_Sans',sans-serif] text-[13px] text-[#24292e]">
      <header className="flex h-[57px] items-center bg-[#24292e] pl-3.5 pr-3.5 font-bold text-white">
        <a href="#home" aria-label="GitHub"><Oct name="mark" className="h-[29px]" /></a>
        <label className="ml-[15px] flex h-[25px] w-[270px] items-center rounded-[3px] bg-[#3f4448] pl-[7px] pr-2">
          <input type="text" aria-label="Search" placeholder="Search or jump to…" className="min-w-0 flex-1 bg-transparent font-normal outline-none placeholder:text-[#989b9e]" />
          <span className="flex h-[18px] w-[17px] items-center justify-center rounded-[3px] border border-[#6b7074] text-[10px] font-normal text-[#989b9e]">/</span>
        </label>
        <nav className="ml-3.5 flex gap-4 text-xs">
          <a href="#pulls">Pull requests</a>
          <a href="#issues">Issues</a>
          <a href="#marketplace">Marketplace</a>
          <a href="#explore">Explore</a>
        </nav>
        <div className="ml-auto flex items-center">
          <button aria-label="Notifications" className="relative">
            <Oct name="bell" className="h-[14px]" />
            <span className="absolute -right-1 -top-1.5 h-2.5 w-2.5 rounded-full border border-[#24292e] bg-[#1683ea]" />
          </button>
          <button aria-label="Create new" className="ml-3 flex items-center gap-0.5"><MdAdd className="h-4 w-4" /><Caret /></button>
          <button aria-label="View profile" className="ml-3.5 flex items-center gap-[3px]"><Avatar /><Caret /></button>
        </div>
      </header>

      <div className="border-y border-[#d9bcc0] bg-[#f5d2d6] pb-[13px] pt-3.5 text-[#8a2230]">
        <div className={WRAP}>
          <p className="flex items-center gap-1 leading-[18px]">
            <Oct name="alert" />
            <span>
              The password you provided is weak and can be easily guessed. To increase your security, please{" "}
              <a href="#password" className={LINK}>change your password</a> as soon as possible.
            </span>
          </p>
          <p className="mt-[9px] text-[11px] leading-4">
            Read our documentation on <a href="#docs" className={LINK}>safer password practices</a>.
          </p>
        </div>
      </div>

      <div className="border-b border-[#d5d8dc] bg-[#eff1f3] pt-[23px]">
        <div className={WRAP}>
          <div className="flex h-[25px] items-center">
            <Oct name="repo" className="h-[14px] text-[#8b949e]" />
            <h1 className="ml-1.5 flex-1 text-base">
              <a href="#owner" className={LINK}>tigarto</a>
              <span className="text-[#586069]"> / </span>
              <a href="#repo" className={`font-bold ${LINK}`}>lab0-repo-12_14</a>
            </h1>
            <div className="flex gap-[9px]">
              <Counter icon="eye" label="Watch" caret />
              <Counter icon="star" label="Star" />
              <Counter icon="fork" label="Fork" />
            </div>
          </div>
          <nav className="mt-3.5 flex h-[34px] items-stretch text-[#586069]">
            <a href="#code" className="-mb-px mr-px flex items-center gap-1 rounded-t-[3px] border-x border-t-[3px] border-x-[#d5d8dc] border-t-[#e8591c] bg-[#f5f5f5] px-2.5 text-[#24292e]">
              <Oct name="code" className="h-[14px]" />
              Code
            </a>
            {REPO_TABS.map((tab) => (
              <a key={tab.label} href={`#${tab.label}`} className="flex items-center gap-1 px-[11px] pt-0.5">
                <Oct name={tab.icon} className="h-[14px] text-[#aeb2b6]" />
                {tab.label}
                {tab.count !== undefined && <span className="rounded-full bg-[#e0e2e4] px-1 text-[11px] font-bold leading-[14px] text-[#444d56]">{tab.count}</span>}
              </a>
            ))}
          </nav>
        </div>
      </div>

      <main className={`${WRAP} pt-[22px]`}>
        <div className="flex items-start">
          <div className="flex-1">
            <p className="text-[14px] italic leading-5 text-[#586069]">No description, website, or topics provided.</p>
            <a href="#topics" className={`mt-[9px] block text-[11px] leading-4 ${LINK}`}>Manage topics</a>
          </div>
          <button className={`${BTN} rounded-[3px]`}>Edit</button>
        </div>

        <ul className="mt-[15px] grid h-[38px] grid-cols-4 items-center rounded-[3px] border border-[#d9dbde] text-[#586069]">
          {STATS.map((s) => (
            <li key={s.label}>
              <a href={`#${s.label}`} className="flex items-center justify-center gap-1">
                <Oct name={s.icon} />
                <strong className="text-[#24292e]">{s.n}</strong>
                {s.label}
              </a>
            </li>
          ))}
        </ul>

        <div className="mt-[15px] flex">
          <button className={`${BTN} rounded-[3px]`}><span className="font-normal text-[#586069]">Branch:</span>master<Caret /></button>
          <button className={`${BTN} ml-[5px] rounded-[3px]`}>New pull request</button>
          <div className="ml-auto flex">
            <button className={`${BTN} rounded-l-[3px]`}>Create new file</button>
            <button className={`${BTN} -ml-px`}>Upload files</button>
            <button className={`${BTN} -ml-px rounded-r-[3px]`}>Find File</button>
          </div>
          <button className="ml-[7px] flex h-[25px] items-center gap-1 rounded-[3px] border border-[#1c8a42] bg-linear-to-b from-[#07bb57] to-[#069443] px-2 text-[11px] font-bold text-white">
            Clone or download <Caret />
          </button>
        </div>

        <div className="mt-[9px] flex h-[39px] items-center rounded-t-[3px] border border-[#b5d5ef] bg-[#e5edf5] px-2 text-[11px] text-[#586069]">
          <Avatar />
          <a href="#author" className="ml-1.5 font-bold text-[#24292e]">tigarto</a>
          <span className="ml-1 flex-1">Agregando las capturas de evidencia</span>
          <span>
            Latest commit <a href="#sha" className="font-['Liberation_Mono',monospace]">3e2e03c</a> 4 minutes ago
          </span>
        </div>
        <div className="relative rounded-b-[3px] border border-t-0 border-[#d9dbde]">
          <table className="w-full border-separate border-spacing-0 text-[#626a72]">
            <tbody>
              {FILES.map((f) => {
                const cell = f.hover ? "h-7 bg-[#e9edf0]" : "h-[29px] border-t border-[#dfe2e5]";
                return (
                  <tr key={f.name}>
                    <td className={`w-[188px] py-0 pl-2 pr-0 ${cell}`}>
                      <a href={`#${f.name}`} className={`flex items-center gap-1 ${LINK} ${f.hover ? "underline" : ""}`}>
                        <Oct name="file" className="h-[14px] text-[#7d93aa]" />
                        {f.name}
                      </a>
                    </td>
                    <td className={`p-0 ${cell}`}>{f.message}</td>
                    <td className={`py-0 pl-0 pr-2.5 text-right ${cell}`}>{f.age}</td>
                  </tr>
                );
              })}
            </tbody>
          </table>
          <div role="tooltip" className="absolute left-[68px] top-[31px] flex h-[26px] items-center whitespace-nowrap bg-[#2d2d2d] px-2 font-['Noto_Sans',sans-serif] text-[15px] text-[#eee] shadow-[0_8px_24px_rgba(0,0,0,0.4)]">
            figura1.png
          </div>
        </div>

        <section className="mt-[9px] rounded-[3px] border border-[#c9cdd2]">
          <div className="flex h-[30px] items-center border-b border-[#c9cdd2] bg-[#e9edf0] pl-2 pr-2.5">
            <Oct name="book" className="h-[13px] text-[#444d56]" />
            <h2 className="ml-1 flex-1 text-xs font-bold">readme.md</h2>
            <button aria-label="Edit this file" className="text-[#444d56]"><Oct name="pencil" className="h-[14px]" /></button>
          </div>
          <article className="px-[43px] pb-[35px] pt-9">
            <h1 className="border-b border-[#e0e2e5] pb-2 text-[29px] font-bold leading-9">Agenda</h1>
            <h2 className="mt-5 border-b border-[#e0e2e5] pb-1.5 text-[22px] font-bold leading-7">¿Qué hace un Sistema Operativo?</h2>
            <ul className="mt-[13px] list-disc space-y-[3px] pl-[29px] text-[14px] leading-[22px]">
              <li>Definición de los Sistemas Operativos</li>
              <li>Virtualización de Recursos</li>
              <li>Objetivos de diseño de los Sistemas Operativos</li>
            </ul>
          </article>
        </section>

        <footer className={`mt-9 flex items-start justify-between border-t border-[#dfe1e4] pt-9 text-[11px] leading-4 ${LINK}`}>
          <div className="flex gap-[13px]">
            <span className="text-[#586069]">© 2019 GitHub, Inc.</span>
            <a href="#terms">Terms</a>
            <a href="#privacy">Privacy</a>
            <a href="#security">Security</a>
            <a href="#status">Status</a>
            <a href="#help">Help</a>
          </div>
          <a href="#home" aria-label="GitHub"><Oct name="mark" className="h-[22px] text-[#bfc3c9]" /></a>
          <div className="flex gap-[13px]">
            <a href="#contact">Contact GitHub</a>
            <a href="#pricing">Pricing</a>
            <a href="#api">API</a>
            <a href="#training">Training</a>
            <a href="#blog">Blog</a>
            <a href="#about">About</a>
          </div>
        </footer>
      </main>

      <div role="status" className="absolute bottom-0 left-0 flex h-[23px] w-[617px] items-center rounded-tr-[4px] border-r border-t border-[#cfcdce] bg-[#e9e7e8] pl-1 font-['Noto_Sans',sans-serif] text-[15px] text-[#777]">
        https://github.com/tigarto/lab0-repo-12_14/blob/master/figura1.png
      </div>
    </div>
  );
}

/* ---------- Desktop ---------- */

const MAIL_TABS: TabInfo[] = [
  { title: "GitHub Classroom", icon: "classroom-gh" },
  { title: "Recibidos (2.132) - h", icon: "gmail", active: true },
  { title: "20191 - Sistemas Op", icon: "classroom" },
  { title: "usuarios github - Ho", icon: "sheets" },
];

const HUB_TABS: TabInfo[] = [
  { title: "Reference Sheets de", icon: "classroom" },
  { title: "intro-basi-git-tigart", icon: "github" },
  { title: "Lab 0", icon: "github" },
  { title: "Adding an existing", icon: "github" },
  { title: "tigarto/lab0-repo-1", icon: "github", active: true },
];

export default function App() {
  return (
    <div className="flex min-h-screen bg-black">
      <div className="flex min-w-0 flex-[1680_1_0px] flex-col">
        <TopBar />
        <div className="flex">
          <Launcher />
          <div className="min-w-0 flex-1">
            <div className="font-['Noto_Sans',sans-serif]">
              <TabStrip tabs={MAIL_TABS} dark />
              <AddressBar
                host="mail.google.com"
                path="/mail/u/0/#inbox"
                tool={
                  <svg viewBox="0 0 16 12" className="h-3 w-[15px]" fill="none" stroke="#777" aria-hidden="true">
                    <path d="M6 1L1 6l5 5M10 1l5 5-5 5" strokeWidth="1.500" />
                    <path d="M8 1l4 5-4 5-4-5z" fill="#777" stroke="none" />
                  </svg>
                }
              />
            </div>
            <Gmail />
          </div>
        </div>
      </div>
      <div className="flex min-w-0 flex-[1920_1_0px] flex-col">
        <TopBar title="tigarto/lab0-repo-12_14 - Google Chrome" />
        <div className="flex flex-1">
          <Launcher />
          <div className="flex min-w-0 flex-1 flex-col">
            <div className="font-['Noto_Sans',sans-serif]">
              <TabStrip tabs={HUB_TABS} />
              <AddressBar host="github.com" path="/tigarto/lab0-repo-12_14" tool={<MdZoomOut className="h-[18px] w-[18px] text-[#888]" />} />
            </div>
            <GitHub />
          </div>
        </div>
      </div>
    </div>
  );
}
